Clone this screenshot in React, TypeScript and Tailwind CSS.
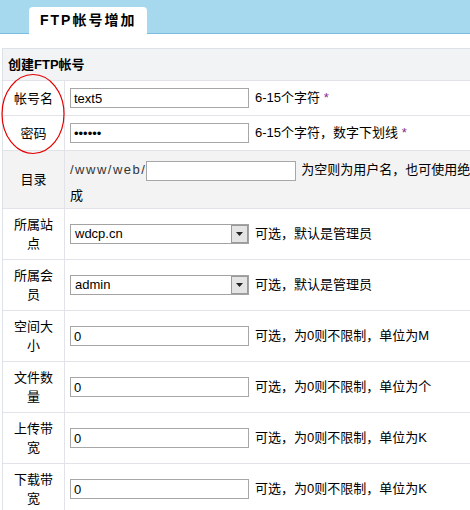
import React from 'react';

type Field = {
  label: string;
  kind: 'input' | 'select';
  value: string;
  hint: string;
};

const fields: Field[] = [
  { label: '所属站点', kind: 'select', value: 'wdcp.cn', hint: '可选，默认是管理员' },
  { label: '所属会员', kind: 'select', value: 'admin', hint: '可选，默认是管理员' },
  { label: '空间大小', kind: 'input', value: '0', hint: '可选，为0则不限制，单位为M' },
  { label: '文件数量', kind: 'input', value: '0', hint: '可选，为0则不限制，单位为个' },
  { label: '上传带宽', kind: 'input', value: '0', hint: '可选，为0则不限制，单位为K' },
  { label: '下载带宽', kind: 'input', value: '0', hint: '可选，为0则不限制，单位为K' },
];

function TextBox({ value, type = 'text', width = 'w-[179px]' }: { value: string; type?: string; width?: string }) {
  return (
    <input
      type={type}
      readOnly
      defaultValue={value}
      className={`${width} h-[20px] border border-[#a7a7a7] bg-white px-[3px] text-[13px] text-black outline-none align-middle`}
    />
  );
}

function SelectBox({ value }: { value: string }) {
  return (
    <div className="flex w-[179px] h-[20px] border border-[#a3a3a3] bg-white">
      <span className="flex-1 pl-[4px] leading-[18px] text-[13px] text-black">{value}</span>
      <div className="w-[17px] h-full border border-[#9a9a9a] bg-[#e4e4e4] flex items-center justify-center">
        <svg width="7" height="4" viewBox="0 0 7 4">
          <path d="M0 0 L7 0 L3.5 4 Z" fill="#222" />
        </svg>
      </div>
    </div>
  );
}

function Row({ label, height, gray, children }: { label: string; height: string; gray?: boolean; children: React.ReactNode }) {
  return (
    <div className={`flex ${height} border-b border-[#e2e3e8] ${gray ? 'bg-[#f3f3f3]' : 'bg-white'}`}>
      <div className="w-[62px] shrink-0 border-r border-[#e2e3e8] px-[9px] flex items-center justify-center text-center leading-[19px]">
        {label}
      </div>
      {children}
    </div>
  );
}

export default function App() {
  return (
    <div className="relative w-[470px] h-[510px] overflow-hidden bg-white text-[13px] text-black font-['Liberation_Sans','Noto_Sans_CJK_SC',sans-serif]">
      {/* title bar */}
      <div className="w-[720px] h-[34px] bg-[#a6d8ee] border-b border-[#79bde0] flex items-end pl-[29px]">
        <div className="w-[118px] h-[27px] -mb-px bg-white rounded-t-[4px] flex items-center pl-[11px] text-[14px] font-bold tracking-[2px]">
          FTP帐号增加
        </div>
      </div>

      {/* form table */}
      <div className="w-[720px] mt-[14px] ml-[2px] border-l border-t border-[#dde1e8]">
        <div className="h-[32px] bg-[#f2f3f5] border-b border-[#e2e3e8] flex items-center pl-[5px] font-bold">
          创建FTP帐号
        </div>

        <Row label="帐号名" height="h-[35px]">
          <div className="flex-1 flex items-center pl-[5px]">
            <TextBox value="text5" />
            <span className="ml-[6px]">6-15个字符 <span className="text-[#8a2a8a]">*</span></span>
          </div>
        </Row>

        <Row label="密码" height="h-[35px]">
          <div className="flex-1 flex items-center pl-[5px]">
            <TextBox value="123456" type="password" />
            <span className="ml-[6px]">6-15个字符，数字下划线 <span className="text-[#8a2a8a]">*</span></span>
          </div>
        </Row>

        <Row label="目录" height="h-[58px]" gray>
          <div className="flex-1 pl-[5px] pt-[6px] leading-[26px] whitespace-nowrap">
            <span className="tracking-[1.5px] text-[#333]">/www/web/</span>
            <TextBox value="" width="w-[150px]" />
            <span className="ml-[5px]">为空则为用户名，也可使用绝</span>
            <br />
            成
          </div>
        </Row>

        {fields.map((f) => (
          <Row key={f.label} label={f.label} height="h-[51px]">
            <div className="flex-1 flex items-center pl-[5px]">
              {f.kind === 'select' ? <SelectBox value={f.value} /> : <TextBox value={f.value} />}
              <span className="ml-[6px]">{f.hint}</span>
            </div>
          </Row>
        ))}
      </div>

      {/* red annotation circle */}
      <svg className="absolute left-0 top-[72px] pointer-events-none" width="68" height="86" viewBox="0 0 68 86">
        <ellipse cx="33" cy="42" rx="31" ry="39.5" fill="none" stroke="#e40000" strokeWidth="1.2" />
      </svg>
    </div>
  );
}
